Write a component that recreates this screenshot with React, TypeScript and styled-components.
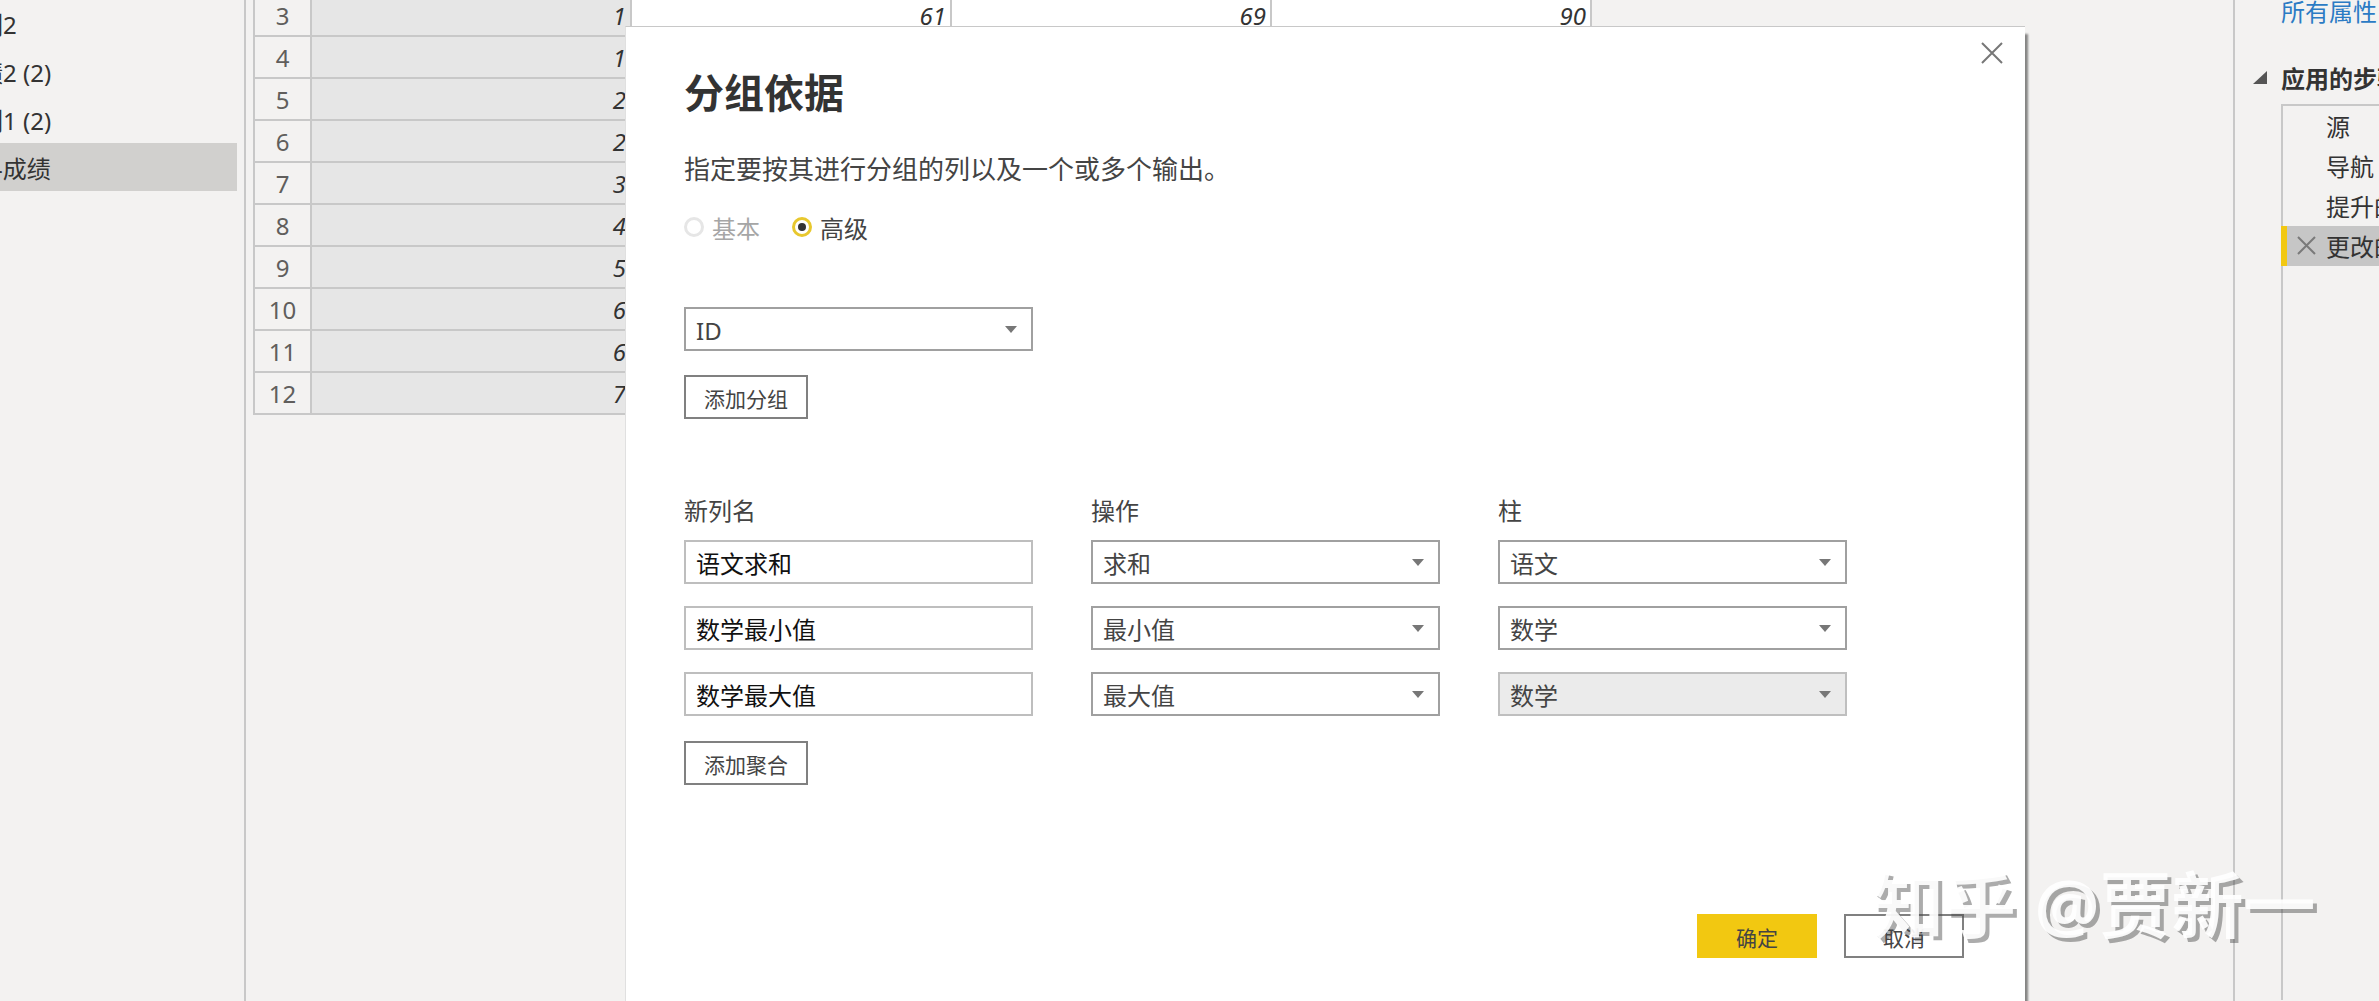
import React from "react";
import styled, { createGlobalStyle } from "styled-components";

const GlobalStyle = createGlobalStyle`
  html, body {
    margin: 0;
    padding: 0;
    background: #f3f2f1;
  }
  * {
    box-sizing: border-box;
  }
`;

const Page = styled.div`
  position: relative;
  display: flex;
  width: 2379px;
  height: 1001px;
  overflow: hidden;
  background: #f3f2f1;
  color: #333;
  font-family: "Noto Sans", "Noto Sans CJK SC", sans-serif;
  font-size: 24px;
  line-height: 24px;
`;

/* left query list */
const Sidebar = styled.div`
  flex: none;
  width: 246px;
  margin-top: -1px;
  padding-right: 7px;
  border-right: 2px solid #c8c8c8;
  overflow: hidden;
`;

const QueryItem = styled.div<{ $shift: number; $active?: boolean }>`
  height: 48px;
  padding-top: 14px;
  white-space: nowrap;
  overflow: hidden;
  text-indent: ${(p) => p.$shift}px;
  background: ${(p) => (p.$active ? "#d1d0ce" : "transparent")};
`;

/* data grid behind the dialog */
const Main = styled.div`
  flex: 1;
  min-width: 0;
  padding-left: 7px;
  overflow: hidden;
`;

const Table = styled.div`
  width: 1339px;
  margin-top: -5px;
  border-left: 2px solid #c8c8c8;
`;

const Row = styled.div`
  display: grid;
  grid-template-columns: 57px 320px 320px 320px 320px;
  height: 42px;
  border-bottom: 2px solid #c8c8c8;
`;

const RowNumber = styled.div`
  padding-top: 9px;
  border-right: 2px solid #c8c8c8;
  color: #605e5c;
  text-align: center;
`;

const Cell = styled.div<{ $shaded?: boolean }>`
  padding: 9px 4px 0 0;
  border-right: 2px solid #c8c8c8;
  background: ${(p) => (p.$shaded ? "#e6e6e6" : "#fff")};
  color: #333;
  font-style: italic;
  text-align: right;
`;

/* right "applied steps" panel */
const StepsPanel = styled.div`
  flex: none;
  width: 146px;
  padding-left: 46px;
  border-left: 2px solid #c8c8c8;
  overflow: hidden;
  white-space: nowrap;
`;

const PropsLink = styled.div`
  color: #2b7bc4;
`;

const StepsTitle = styled.div`
  display: flex;
  align-items: center;
  gap: 14px;
  margin: 43px 0 13px -28px;
  font-weight: 700;
`;

const Collapse = styled.svg`
  flex: none;
  width: 14px;
  height: 13px;
  margin-top: -3px;
  fill: #555;
`;

const StepsList = styled.div`
  height: 896px;
  border-top: 2px solid #c8c8c8;
  border-left: 2px solid #c8c8c8;
`;

const Step = styled.div<{ $active?: boolean }>`
  display: flex;
  align-items: center;
  height: 40px;
  margin-left: ${(p) => (p.$active ? "-2px" : "0")};
  padding: 2px 0 0 ${(p) => (p.$active ? "10px" : "43px")};
  border-left: ${(p) => (p.$active ? "6px solid #f2c811" : "none")};
  background: ${(p) => (p.$active ? "#c6c6c6" : "transparent")};
`;

const StepRemove = styled.svg`
  flex: none;
  width: 19px;
  height: 19px;
  margin: -3px 10px 0 0;
  stroke: #7a7a7a;
  stroke-width: 2;
`;

/* dialog */
const Dialog = styled.div`
  position: absolute;
  top: 26px;
  left: 625px;
  display: flex;
  flex-direction: column;
  width: 1400px;
  height: 975px;
  padding: 46px 61px 43px 58px;
  border-top: 1px solid #c8c8c8;
  border-left: 1px solid #e0e0e0;
  background: #fff;
  box-shadow: 3px 8px 2px rgba(0, 0, 0, 0.45);
`;

const CloseIcon = styled.svg`
  position: absolute;
  top: 15px;
  right: 22px;
  width: 22px;
  height: 22px;
  stroke: #777;
  stroke-width: 2;
`;

const Title = styled.div`
  font-size: 40px;
  line-height: 40px;
  font-weight: 700;
  color: #333;
`;

const Subtitle = styled.div`
  margin-top: 43px;
  font-size: 26px;
  line-height: 26px;
  color: #444;
`;

const ModeRow = styled.div`
  display: flex;
  align-items: center;
  gap: 32px;
  margin-top: 34px;
  height: 26px;
`;

const ModeOption = styled.div<{ $disabled?: boolean }>`
  display: flex;
  align-items: center;
  gap: 8px;
  color: ${(p) => (p.$disabled ? "#a6a6a6" : "#444")};
`;

const RadioMark = styled.span<{ $on?: boolean }>`
  display: flex;
  align-items: center;
  justify-content: center;
  width: 20px;
  height: 20px;
  margin-top: -4px;
  border: 3px solid ${(p) => (p.$on ? "#e8c82e" : "#e6e6e6")};
  border-radius: 50%;
  &::after {
    content: "";
    display: ${(p) => (p.$on ? "block" : "none")};
    width: 8px;
    height: 8px;
    border-radius: 50%;
    background: #333;
  }
`;

const SelectBox = styled.div<{ $disabled?: boolean }>`
  display: flex;
  align-items: center;
  justify-content: space-between;
  width: 349px;
  height: 44px;
  padding: 0 14px 0 10px;
  border: 2px solid ${(p) => (p.$disabled ? "#bfbfbf" : "#a0a0a0")};
  background: ${(p) => (p.$disabled ? "#ebebeb" : "#fff")};
  color: #444;
`;

const FieldText = styled.span`
  padding-top: 3px;
`;

const Caret = styled.span`
  width: 0;
  height: 0;
  border-top: 7px solid #777;
  border-left: 6px solid transparent;
  border-right: 6px solid transparent;
`;

const TextBox = styled.div`
  display: flex;
  align-items: center;
  width: 349px;
  height: 44px;
  padding-left: 10px;
  border: 2px solid #bebebe;
  background: #fff;
  color: #111;
`;

const OutlineButton = styled.button<{ $wide?: boolean }>`
  display: block;
  width: ${(p) => (p.$wide ? "120px" : "124px")};
  height: 44px;
  padding: 3px 0 0;
  border: 2px solid #808080;
  background: #fff;
  color: #444;
  font: inherit;
  font-size: 21px;
`;

const PrimaryButton = styled.button`
  width: 120px;
  height: 44px;
  padding: 3px 0 0;
  border: none;
  background: #f2c811;
  color: #444;
  font: inherit;
  font-size: 21px;
`;

const GroupSelect = styled.div`
  margin-top: 65px;
`;

const AddGroup = styled.div`
  margin-top: 24px;
`;

const Columns = styled.div`
  display: grid;
  grid-template-columns: repeat(3, 349px);
  column-gap: 58px;
`;

const Headings = styled(Columns)`
  margin: 80px 0 17px;
  color: #444;
`;

const Rows = styled.div`
  display: flex;
  flex-direction: column;
  gap: 22px;
`;

const AddAggregate = styled.div`
  margin-top: 25px;
`;

const Footer = styled.div`
  display: flex;
  justify-content: flex-end;
  gap: 27px;
  margin-top: auto;
`;

const Watermark = styled.div`
  position: absolute;
  left: 1872px;
  top: 868px;
  color: rgba(255, 255, 255, 0.92);
  font-size: 72px;
  line-height: 72px;
  font-weight: 700;
  white-space: nowrap;
  text-shadow: 4px 4px 0 rgba(70, 70, 70, 0.45);
  pointer-events: none;
`;

const queries = [
  { name: "列2", shift: -21 },
  { name: "成绩2 (2)", shift: -45 },
  { name: "列1 (2)", shift: -21 },
  { name: "学生-成绩", shift: -53, active: true },
];

const rows = [3, 4, 5, 6, 7, 8, 9, 10, 11, 12];
const firstCol = ["1", "1", "2", "2", "3", "4", "5", "6", "6", "7"];

const aggregates = [
  { name: "语文求和", op: "求和", col: "语文" },
  { name: "数学最小值", op: "最小值", col: "数学" },
  { name: "数学最大值", op: "最大值", col: "数学", off: true },
];

const Select = ({ value, disabled }: { value: string; disabled?: boolean }) => (
  <SelectBox $disabled={disabled}>
    <FieldText>{value}</FieldText>
    <Caret />
  </SelectBox>
);

export default function App() {
  return (
    <Page>
      <GlobalStyle />
      <Sidebar>
        {queries.map((q) => (
          <QueryItem key={q.name} $shift={q.shift} $active={q.active}>
            {q.name}
          </QueryItem>
        ))}
      </Sidebar>

      <Main>
        <Table>
          {rows.map((n, i) => (
            <Row key={n}>
              <RowNumber>{n}</RowNumber>
              <Cell $shaded>{firstCol[i]}</Cell>
              <Cell>{n === 3 ? "61" : ""}</Cell>
              <Cell>{n === 3 ? "69" : ""}</Cell>
              <Cell>{n === 3 ? "90" : ""}</Cell>
            </Row>
          ))}
        </Table>
      </Main>

      <StepsPanel>
        <PropsLink>所有属性</PropsLink>
        <StepsTitle>
          <Collapse viewBox="0 0 14 13">
            <path d="M14 0V13H0Z" />
          </Collapse>
          应用的步骤
        </StepsTitle>
        <StepsList>
          <Step>源</Step>
          <Step>导航</Step>
          <Step>提升的标题</Step>
          <Step $active>
            <StepRemove viewBox="0 0 19 19">
              <path d="M1 1L18 18M18 1L1 18" />
            </StepRemove>
            更改的类型
          </Step>
        </StepsList>
      </StepsPanel>

      <Dialog>
        <CloseIcon viewBox="0 0 22 22">
          <path d="M1 1L21 21M21 1L1 21" />
        </CloseIcon>
        <Title>分组依据</Title>
        <Subtitle>指定要按其进行分组的列以及一个或多个输出。</Subtitle>
        <ModeRow>
          <ModeOption $disabled>
            <RadioMark />
            基本
          </ModeOption>
          <ModeOption>
            <RadioMark $on />
            高级
          </ModeOption>
        </ModeRow>

        <GroupSelect>
          <Select value="ID" />
        </GroupSelect>
        <AddGroup>
          <OutlineButton>添加分组</OutlineButton>
        </AddGroup>

        <Headings>
          <div>新列名</div>
          <div>操作</div>
          <div>柱</div>
        </Headings>
        <Rows>
          {aggregates.map((a) => (
            <Columns key={a.name}>
              <TextBox>
                <FieldText>{a.name}</FieldText>
              </TextBox>
              <Select value={a.op} />
              <Select value={a.col} disabled={a.off} />
            </Columns>
          ))}
        </Rows>
        <AddAggregate>
          <OutlineButton>添加聚合</OutlineButton>
        </AddAggregate>

        <Footer>
          <PrimaryButton>确定</PrimaryButton>
          <OutlineButton $wide>取消</OutlineButton>
        </Footer>
      </Dialog>

      <Watermark>知乎 @贾新一</Watermark>
    </Page>
  );
}
